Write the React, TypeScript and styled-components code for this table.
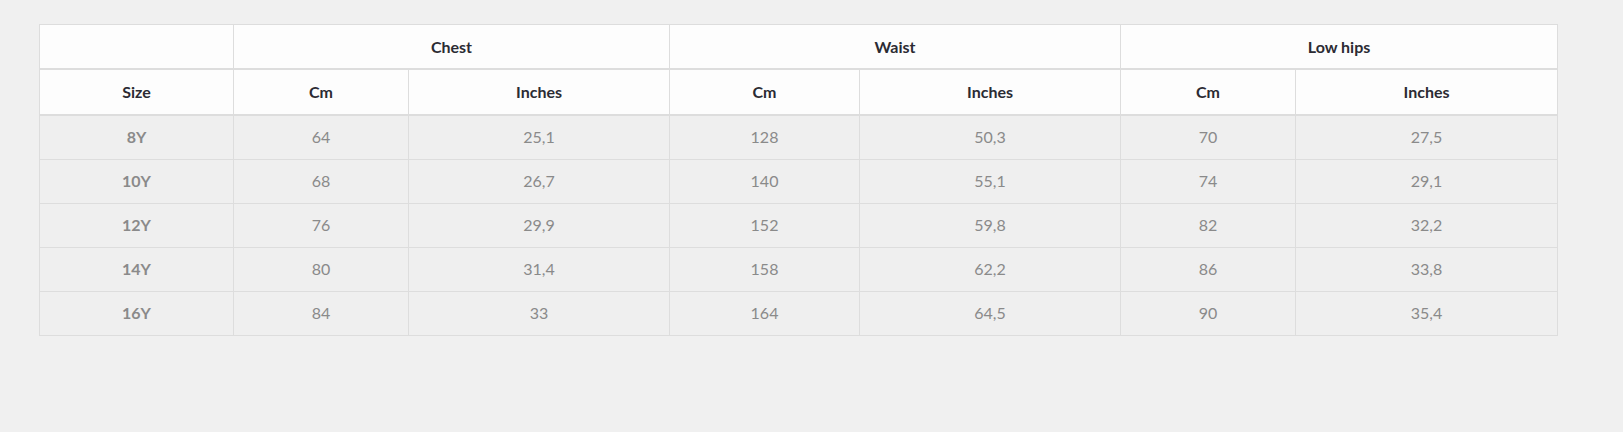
import React from "react";
import styled, { createGlobalStyle } from "styled-components";

const Global = createGlobalStyle`
  html, body { margin: 0; padding: 0; background: #f0f0f0; }
  body { font-family: Lato, "Noto Sans", sans-serif; }
`;

const Page = styled.div`
  padding: 24px 66px 0 39px;
  min-height: 432px;
  box-sizing: border-box;
`;

const Table = styled.table`
  width: 1518px;
  border-collapse: collapse;
  table-layout: fixed;
  font-family: Lato, sans-serif;
  font-size: 16px;
  border: 1px solid #dddddd;
`;

const HeadCell = styled.th<{ $tall?: boolean }>`
  height: ${(p) => (p.$tall ? 42 : 43)}px;
  padding: 0 0 ${(p) => (p.$tall ? 2 : 0)}px;
  background: #fdfdfd;
  color: #2b2b33;
  font-weight: 700;
  text-align: center;
  border: 1px solid #dddddd;
  border-bottom: 2px solid #dddddd;
`;

const BodyRow = styled.tr`
  background: #efefef;
`;

const Cell = styled.td<{ $bold?: boolean }>`
  height: 41px;
  padding: 0 0 2px;
  text-align: center;
  color: #8a8a8a;
  font-weight: ${(p) => (p.$bold ? 700 : 400)};
  border: 1px solid #dddddd;
`;

const widths = [194, 175, 261, 190, 261, 175, 262];

const rows = [
  ["8Y", "64", "25,1", "128", "50,3", "70", "27,5"],
  ["10Y", "68", "26,7", "140", "55,1", "74", "29,1"],
  ["12Y", "76", "29,9", "152", "59,8", "82", "32,2"],
  ["14Y", "80", "31,4", "158", "62,2", "86", "33,8"],
  ["16Y", "84", "33", "164", "64,5", "90", "35,4"],
];

const subHeads = ["Size", "Cm", "Inches", "Cm", "Inches", "Cm", "Inches"];

export default function App() {
  return (
    <>
      <Global />
      <Page>
        <Table>
          <colgroup>
            {widths.map((w, i) => (
              <col key={i} style={{ width: w }} />
            ))}
          </colgroup>
          <thead>
            <tr>
              <HeadCell />
              <HeadCell colSpan={2}>Chest</HeadCell>
              <HeadCell colSpan={2}>Waist</HeadCell>
              <HeadCell colSpan={2}>Low hips</HeadCell>
            </tr>
            <tr>
              {subHeads.map((h, i) => (
                <HeadCell key={i} $tall>
                  {h}
                </HeadCell>
              ))}
            </tr>
          </thead>
          <tbody>
            {rows.map((r) => (
              <BodyRow key={r[0]}>
                {r.map((v, i) => (
                  <Cell key={i} $bold={i === 0}>
                    {v}
                  </Cell>
                ))}
              </BodyRow>
            ))}
          </tbody>
        </Table>
      </Page>
    </>
  );
}
